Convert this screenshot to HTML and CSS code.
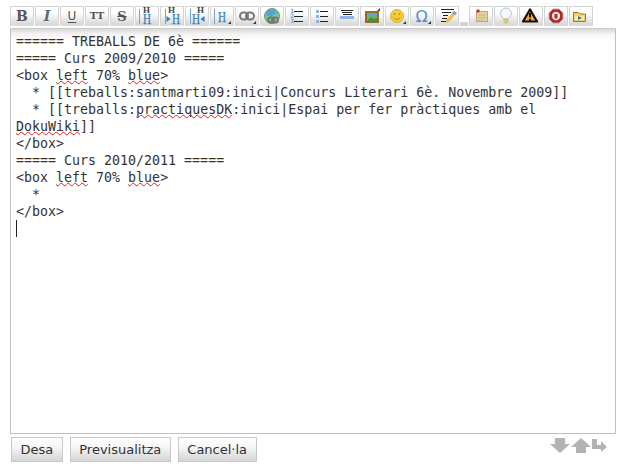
FILE: index.html
```html
<!DOCTYPE html>
<html lang="ca">
<head>
<meta charset="utf-8">
<title>Edita</title>
<link rel="stylesheet" href="styles.css">
</head>
<body>
<div class="toolbar">
  <button class="tb"><span class="g b">B</span></button>
  <button class="tb"><span class="g i">I</span></button>
  <button class="tb"><span class="g u">U</span></button>
  <button class="tb"><span class="g tt">TT</span></button>
  <button class="tb"><span class="g s">S</span></button>
  <button class="tb"><svg viewBox="0 0 24 20"><path d="M4.500 3v15" class="hb"/><text x="8" y="7" class="hs" textLength="7" lengthAdjust="spacingAndGlyphs">H</text><text x="8" y="18" class="hl" textLength="8" lengthAdjust="spacingAndGlyphs">H</text></svg></button>
  <button class="tb"><svg viewBox="0 0 24 20"><path d="M5.500 3v15" class="hb"/><path d="M6.500 10l4 3-4 3z" fill="#2f7fc0"/><text x="8" y="7" class="hs" textLength="7" lengthAdjust="spacingAndGlyphs">H</text><text x="12" y="18" class="hl" textLength="8" lengthAdjust="spacingAndGlyphs">H</text></svg></button>
  <button class="tb"><svg viewBox="0 0 24 20"><path d="M5.500 3v15" class="hb"/><path d="M19.500 10l-4 3 4 3z" fill="#2f7fc0"/><text x="12" y="7" class="hs" textLength="7" lengthAdjust="spacingAndGlyphs">H</text><text x="7" y="18" class="hl" textLength="8" lengthAdjust="spacingAndGlyphs">H</text></svg></button>
  <button class="tb"><svg viewBox="0 0 24 20"><path d="M4.500 3v15" class="hb"/><text x="8" y="16" class="hl" textLength="8" lengthAdjust="spacingAndGlyphs">H</text><path class="tri" d="M21 15v3h-3z"/></svg></button>
  <button class="tb"><svg viewBox="0 0 24 20"><rect x="5" y="6.500" width="8" height="7" rx="3.500" class="ch"/><rect x="11" y="6.500" width="8" height="7" rx="3.500" class="ch"/><path class="tri" d="M21 15v3h-3z"/></svg></button>
  <button class="tb"><svg viewBox="0 0 24 20"><circle cx="12" cy="10" r="7.500" fill="#7cc48c" stroke="#5aa56c"/><path d="M8 4l6-1 3 4-5 3-1 1-5-2z" fill="#5aa0d8"/><rect x="8" y="11.500" width="6" height="5" rx="2.500" class="ch"/><rect x="12" y="11.500" width="6" height="5" rx="2.500" class="ch"/></svg></button>
  <button class="tb"><svg viewBox="0 0 24 20"><text x="5" y="7" class="nm">1</text><text x="5" y="12" class="nm">2</text><text x="5" y="17" class="nm">3</text><path d="M9 5.500h9M9 10.500h9M9 15.500h9" class="ln"/></svg></button>
  <button class="tb"><svg viewBox="0 0 24 20"><rect x="6" y="4" width="3" height="3" fill="#8fb4e8"/><rect x="6" y="9" width="3" height="3" fill="#8fb4e8"/><rect x="6" y="14" width="3" height="3" fill="#8fb4e8"/><path d="M10 5.500h8M10 10.500h8M10 15.500h8" class="ln"/></svg></button>
  <button class="tb"><svg viewBox="0 0 24 20"><path d="M6 4.500h12M7 6.500h10M8 8.500h9" class="ln"/><rect x="5" y="10" width="14" height="3" fill="#8fb4e8"/></svg></button>
  <button class="tb"><svg viewBox="0 0 24 20"><rect x="6" y="6" width="12" height="10" fill="#6fb36c" stroke="#9a6a2a" stroke-width="2"/><path d="M7 15l4-4 3 2 3-1v3z" fill="#3d8f4a"/><rect x="7" y="7" width="10" height="3" fill="#5ba7d8"/><path d="M20 2v3h-3z" fill="#444"/></svg></button>
  <button class="tb"><svg viewBox="0 0 24 20"><circle cx="12" cy="10" r="6.500" fill="#f4cb3c" stroke="#dcae34"/><path d="M8.500 11.500c2 2.500 5 2.500 7 0" fill="none" stroke="#c0901c"/><circle cx="9.500" cy="8" r=".9" fill="#c0901c"/><circle cx="14.500" cy="8" r=".9" fill="#c0901c"/><path class="tri" d="M21 15v3h-3z"/></svg></button>
  <button class="tb"><svg viewBox="0 0 24 20"><text x="5.500" y="16" class="om">Ω</text><path class="tri" d="M21 15v3h-3z"/></svg></button>
  <button class="tb"><svg viewBox="0 0 24 20"><path d="M6 3.500h13M7 6.500h9M8 9.500h5M7 12.500h5M6 15.500h5" class="ln"/><path d="M11 14l7-8 3 2-7 8-3 1z" fill="#f2c040"/><path d="M17 7l2-2 3 2-2 2z" fill="#6aa3e0"/></svg></button>
  <button class="tb tb-small" aria-label="separador"></button>
  <button class="tb"><svg viewBox="0 0 24 20"><rect x="7.500" y="5.500" width="11" height="10" fill="#e6d49f" stroke="#b8a878"/><path d="M9 9h8M9 11.500h8M9 14h6" stroke="#c9b680"/><circle cx="9" cy="5" r="1.800" fill="#c33"/></svg></button>
  <button class="tb"><svg viewBox="0 0 24 20"><circle cx="12" cy="7.500" r="5.500" fill="#f4f7fb" stroke="#b9c3cf"/><path d="M9.500 12.500h5v3l-1 2h-3l-1-2z" fill="#d9c27a"/></svg></button>
  <button class="tb"><svg viewBox="0 0 24 20"><path d="M11 3.500l7 12h-14z" fill="#f5a92d" stroke="#111" stroke-width="2.200" stroke-linejoin="round"/><path d="M11 7v4.500" stroke="#111" stroke-width="2"/><circle cx="11" cy="14" r="1.200" fill="#111"/></svg></button>
  <button class="tb"><svg viewBox="0 0 24 20"><path d="M9 3h6l4 4v6l-4 4H9l-4-4V7z" fill="#b22" stroke="#aaa"/><circle cx="12" cy="10" r="4.200" fill="#f0e6e0"/><path d="M10.500 8h3v4.500h-3z" fill="#a33"/></svg></button>
  <button class="tb"><svg viewBox="0 0 24 20"><path d="M4.500 6.500h5l1.500 1.500h5.500v7.500h-12z" fill="#f2d36b" stroke="#9a7a20"/><path d="M6 10h9v4H6z" fill="#f9ecae"/><path d="M9 10l4 2-4 2z" fill="#2f7d8f"/></svg></button>
</div>
<main class="editor"><pre class="text">====== TREBALLS DE 6è ======
===== Curs 2009/2010 =====
&lt;box <span class="sp">left</span> 70% <span class="sp">blue</span>&gt;
  * [[treballs:santmarti09:inici|Concurs Literari 6è. Novembre 2009]]
  * [[treballs:<span class="sp">practiquesDK</span>:inici|Espai per fer pràctiques amb el
<span class="sp">DokuWiki</span>]]
&lt;/box&gt;
===== Curs 2010/2011 =====
&lt;box <span class="sp">left</span> 70% <span class="sp">blue</span>&gt;
  *
&lt;/box&gt;
<span class="caret"></span></pre></main>
<div class="actions">
  <button class="btn">Desa</button>
  <button class="btn">Previsualitza</button>
  <button class="btn">Cancel·la</button>
  <div class="sizes">
    <svg width="20" height="15" viewBox="0 0 20 15"><path d="M5 0h10v6h5L10 15 0 6h5z" fill="#b3b3b3"/></svg>
    <svg width="20" height="15" viewBox="0 0 20 15"><path d="M10 0l10 9h-5v6H5V9H0z" fill="#b3b3b3"/></svg>
    <svg width="15" height="15" viewBox="0 0 15 15"><path d="M0 1h5v6h4V3l6 6L9 14v-3H0z" fill="#b3b3b3"/></svg>
  </div>
</div>
</body>
</html>
```
FILE: styles.css
```css
html, body { margin: 0; padding: 0; background: #fff; }
body { width: 630px; height: 472px; overflow: hidden; font-family: "DejaVu Sans", sans-serif; }

.toolbar { display: flex; align-items: flex-end; gap: 1px; padding: 6px 0 0 10px; height: 20px; box-sizing: content-box; }
.tb { width: 24px; height: 20px; padding: 0; flex: none; box-sizing: border-box; border: 1px solid #d4d4d4; border-bottom-color: #e0e0e0;
  background: linear-gradient(#fff, #fdfdfd 35%, #d6d6d6); display: flex; align-items: center; justify-content: center; }
.tb svg { width: 24px; height: 20px; flex: none; margin: -1px; display: block; }
.tb-small { width: 8px; height: 4px; background: #d2d2d2; border: 0; }

.g { font-family: "DejaVu Serif", serif; font-size: 14px; line-height: 1; color: #555; }
.b { font-weight: bold; }
.i { font-style: italic; font-weight: bold; color: #666; }
.u { font-family: "DejaVu Sans", sans-serif; font-size: 12px; text-decoration: underline; text-underline-offset: 2px; }
.tt { font-size: 10px; font-weight: bold; }
.s { font-size: 13px; font-weight: bold; text-decoration: line-through; }

svg text { font-family: "Liberation Serif", serif; }
.hs { font-size: 8px; fill: #444; font-weight: bold; }
.hl { font-size: 15px; fill: #2f7fc0; stroke: #2f7fc0; stroke-width: .25; }
.hb { stroke: #6fa6d6; stroke-width: 1; fill: none; }
.tri { fill: #333; }
.ch { fill: none; stroke: #777; stroke-width: 2; }
.ln { stroke: #222; stroke-width: 1; fill: none; }
svg .nm { font-family: "DejaVu Sans", sans-serif; font-size: 6px; fill: #7fa8e0; font-weight: bold; }
svg .om { font-family: "DejaVu Sans", sans-serif; font-size: 16px; fill: #4a8fd0; }

.editor { margin: 2px 0 0 10px; width: 606px; height: 406px; box-sizing: border-box; border: 1px solid #c0c0c0; border-top-color: #ccc;
  background: linear-gradient(#d8d8d8, #f4f4f4 5px, #fff 12px); padding: 4px 5px; overflow: hidden; }
.text { margin: 0; font-family: "DejaVu Sans Mono", monospace; font-size: 13.3px; line-height: 17px; color: #333; }
.sp { text-decoration: underline wavy #e02020; text-decoration-thickness: 1px; text-underline-offset: 0; text-decoration-skip-ink: none; }
.caret { display: inline-block; height: 17px; border-left: 1px solid #222; vertical-align: top; }

.actions { display: flex; gap: 7px; padding: 3px 0 0 11px; align-items: flex-start; }
.btn { height: 25px; padding: 0 8.5px; box-sizing: border-box; border: 1px solid #c8c8c8; background: linear-gradient(#fff, #f6f6f6 40%, #d4d4d4);
  font-family: "DejaVu Sans", sans-serif; font-size: 13px; color: #333; }
.sizes { display: flex; margin-left: auto; padding: 1px 23px 0 0; gap: 1px; }
```
